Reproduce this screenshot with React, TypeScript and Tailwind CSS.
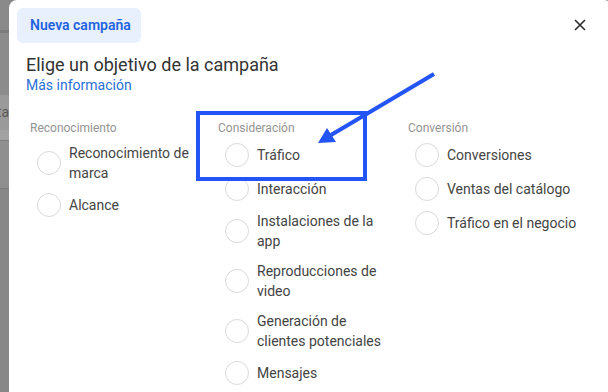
import React from 'react';

type Item = { label: string };
type Column = { title: string; items: Item[] };

const columns: Column[] = [
  {
    title: 'Reconocimiento',
    items: [{ label: 'Reconocimiento de marca' }, { label: 'Alcance' }],
  },
  {
    title: 'Consideración',
    items: [
      { label: 'Tráfico' },
      { label: 'Interacción' },
      { label: 'Instalaciones de la app' },
      { label: 'Reproducciones de video' },
      { label: 'Generación de clientes potenciales' },
      { label: 'Mensajes' },
    ],
  },
  {
    title: 'Conversión',
    items: [
      { label: 'Conversiones' },
      { label: 'Ventas del catálogo' },
      { label: 'Tráfico en el negocio' },
    ],
  },
];

function Radio({ label }: Item) {
  return (
    <label className="flex items-center gap-2 pl-[7px]">
      <span className="w-6 h-6 shrink-0 rounded-full border border-[#d9d9d9] bg-white" />
      <span className="max-w-[138px] text-[14px] leading-[20px] text-[#444444]">{label}</span>
    </label>
  );
}

export default function App() {
  return (
    <div
      className="relative w-[608px] h-[392px] overflow-hidden flex bg-[#868686]"
      style={{ fontFamily: 'Roboto, "Liberation Sans", sans-serif' }}
    >
      {/* dimmed page behind the dialog */}
      <div className="w-[9px] shrink-0 flex flex-col">
        <div className="h-[30px] bg-[#8a8a8a]" />
        <div className="h-[3px] bg-[#7c7c7c]" />
        <div className="h-[62px] bg-[#8c8c8c]" />
        <div className="h-[35px] bg-[#9a9a9a] flex items-center justify-end overflow-hidden">
          <span className="text-[14px] text-[#5a5a5a] whitespace-nowrap">ta</span>
        </div>
        <div className="h-[10px] bg-[#a2a2a2]" />
        <div className="h-px bg-[#7e7e7e]" />
        <div className="h-[47px] bg-[#8f8f8f]" />
        <div className="h-px bg-[#7a7a7a]" />
        <div className="flex-1 bg-[#878787]" />
      </div>

      {/* dialog */}
      <div className="w-[603px] shrink-0 bg-white rounded-t-lg pt-2">
        <div className="flex items-center justify-between pl-2 pr-[26px]">
          <div className="h-[35px] w-[124px] rounded-md bg-[#e7f0fc] flex items-center pl-[13px]">
            <span className="text-[14px] font-semibold text-[#1f63e0]">Nueva campaña</span>
          </div>
          <svg width="12" height="12" viewBox="0 0 12 12" className="mt-[-1px]">
            <path d="M1 1L11 11M11 1L1 11" stroke="#2b2b2b" strokeWidth="1.6" />
          </svg>
        </div>

        <div className="pl-[17px] mt-[11px]">
          <h2 className="text-[18px] leading-[22px] text-[#333333]">Elige un objetivo de la campaña</h2>
          <a className="block text-[14px] leading-[18px] text-[#2a6fd8]">Más información</a>
        </div>

        <div className="grid grid-cols-[188px_190px_1fr] pl-[21px] mt-[26px]">
          {columns.map((col) => (
            <div key={col.title}>
              <div className="text-[12px] leading-[16px] text-[#949494]">{col.title}</div>
              <div className="flex flex-col gap-[10px] mt-[7px]">
                {col.items.map((it) => (
                  <Radio key={it.label} label={it.label} />
                ))}
              </div>
            </div>
          ))}
        </div>
      </div>

      {/* annotation */}
      <svg className="absolute inset-0 pointer-events-none" width="608" height="392">
        <rect x="198" y="113" width="167" height="66" fill="none" stroke="#2354f6" strokeWidth="4" />
        <line x1="434" y1="74" x2="331" y2="135" stroke="#2354f6" strokeWidth="4" />
        <polygon points="318,143 327,128 336,142" fill="#2354f6" />
      </svg>
    </div>
  );
}
